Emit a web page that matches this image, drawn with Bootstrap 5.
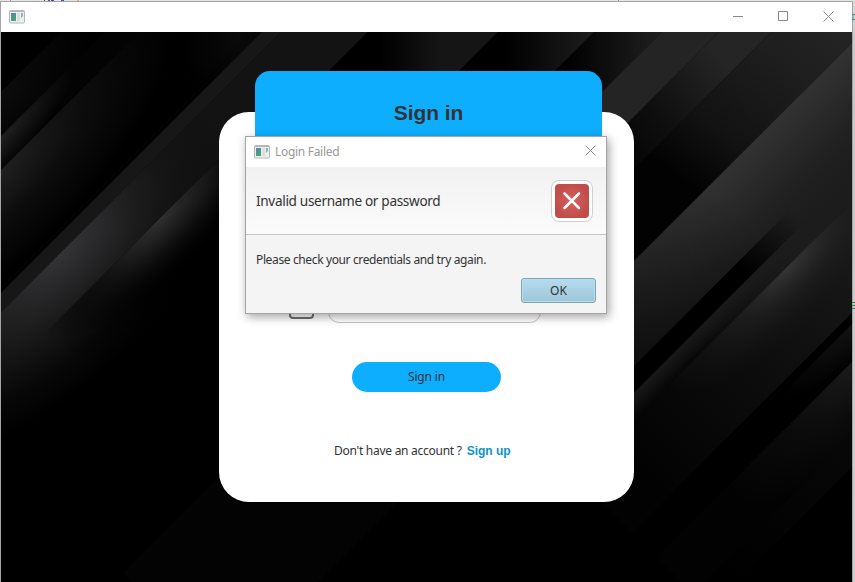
<!DOCTYPE html>
<html lang="en">
<head>
<meta charset="utf-8">
<meta name="viewport" content="width=device-width, initial-scale=1">
<title>Sign in</title>
<link href="https://cdn.jsdelivr.net/npm/bootstrap@5.3.0/dist/css/bootstrap.min.css" rel="stylesheet">
<style>
html,body{height:582px;overflow:hidden}
body{background:#dadada;font-family:"Noto Sans","Open Sans",sans-serif;font-size:12px;line-height:16px;color:#333}
.desk-strip{height:1px;background:#e4e4e4}
.desk-edge{width:2px;background:linear-gradient(#d8d8d8,#c8c8c8 40px,#cfcfcf)}
.desk-mark{right:0;width:3px;overflow:hidden;z-index:2}
.app-frame{width:853px;height:581px;border:1px solid #a3a5a5;border-bottom:0;background:#000}
.app-title{height:30px;background:#fff;padding:0 18px 1px 8px}
.win-ctl{gap:34px}
.app-body{height:550px}
.backdrop{left:0;top:0}
.login-wrap{width:415px;margin-left:218px;padding-top:39px}
.login-panel{height:390px;margin-top:-64px;border-radius:30px;background:#fff}
.login-head{width:347px;height:105px;margin-left:36px;border-radius:15px;background:#0eaeff;z-index:1;padding-top:29px}
.login-head h1{font:bold 21px/26px "Liberation Sans",Arial,sans-serif;margin:0;color:#333;letter-spacing:-.05px}
.pw-row{padding:176px 0 0 70px;gap:14px}
.pw-lock{width:25px;height:31px;border:2px solid #707070;border-radius:4px}
.pw-input{width:213px;height:35px;border:1px solid #c4c4c4;border-radius:11px;background:#fff;padding:0}
.btn-login{width:149px;height:30px;border:0;border-radius:15px;background:#0eaeff;color:#333;font-size:12px;line-height:16px;margin:39px 0 0 133px;letter-spacing:-.15px}
.btn-login:hover{background:#0eaeff;color:#333}
.signup-line{padding:51px 0 0 115px;gap:5px;line-height:16px}
.ask-text{letter-spacing:-.27px}
.title-text{letter-spacing:-.3px;margin-left:1px}
.head-text{font-size:13.600px;letter-spacing:-.33px}
.body-text{letter-spacing:-.37px}
.signup-line a{font:bold 12px/16px "Liberation Sans",Arial,sans-serif;color:#0c93cc}
.alert-win{left:245px;top:136px;width:362px;height:178px;background:#f4f4f4;border:1px solid #a3a5a5;box-shadow:2px 3px 9px rgba(0,0,0,.36);z-index:5}
.alert-title{height:30px;background:#fff;color:#999;padding:0 10px 0 8px}
.alert-head{height:68px;background:linear-gradient(#f1f1f1,#fbfbfb);border-bottom:1px solid #c5c5c5;padding:0 13px 0 10px}
.alert-text{padding:17px 10px 0}
.btn-ok{width:75px;height:25px;border:1px solid #7ba5b5;border-radius:3px;background:linear-gradient(#b3dcee,#9fc6d8);box-shadow:inset 0 0 0 1px #b9dfef;color:#333;font-size:12px;line-height:16px;margin:10px 10px 0 0}
.btn-ok:hover{background:#a9d0e2;color:#333}
</style>
<script src="https://cdn.jsdelivr.net/npm/bootstrap@5.3.0/dist/js/bootstrap.bundle.min.js"></script>
</head>
<body>
<div class="position-relative">
<svg class="position-absolute top-0 start-0" width="620" height="2" style="z-index:2"><path d="M10.500 0v1M618.500 0v1" stroke="#999"/><path d="M44 0h1M48 0h2M51 0h3M61 0h3" stroke="#5148b0" stroke-width="2"/><path d="M78 0v2" stroke="#c58530"/></svg>
<svg class="desk-mark position-absolute top-0" width="3" height="320"><path d="M0 14.500h3M0 19.500h3" stroke="#2d8d72"/><path d="M1 15v4" stroke="#50a8bd"/><path d="M0 302.500h3M0 305.500h3M0 308.500h3" stroke="#2a8b4d"/></svg>
<div class="desk-strip"></div>
<div class="d-flex">
<div class="app-frame">
  <header class="app-title d-flex align-items-center justify-content-between">
    <svg width="16" height="14" viewBox="0 0 16 14"><defs><linearGradient id="ic" x2=".4" y2="1"><stop stop-color="#5b83b0"/><stop offset="1" stop-color="#48a378"/></linearGradient></defs><rect x=".5" y=".5" width="15" height="12.500" rx="1" fill="#eee" stroke="#b5b8bb"/><path d="M1 1.500h14" stroke="#aeb3bb"/><rect x="2" y="3" width="5" height="8" fill="url(#ic)"/><path d="M8 3h3v8H8z" fill="#dedede"/><path d="M12 3h2v3l-2 2z" fill="#82b8b4"/></svg>
    <div class="win-ctl d-flex align-items-center">
      <svg width="11" height="11"><path d="M0 5.500h10" stroke="#888"/></svg>
      <svg width="11" height="11"><path d="M.5.500h9v9h-9z" fill="none" stroke="#888"/></svg>
      <svg width="11" height="11"><path d="M.5.500l10 10M10.500.500l-10 10" stroke="#888" fill="none"/></svg>
    </div>
  </header>
  <main class="app-body position-relative overflow-hidden">
    <svg class="backdrop position-absolute" width="851" height="550" viewBox="1 32 851 550">
      <defs>
        <radialGradient id="a" gradientUnits="userSpaceOnUse" r="1" gradientTransform="translate(93 -91) scale(80 160)" cx="0" cy="0"><stop stop-color="#0c0c0c"/><stop offset="1" stop-color="#000"/></radialGradient>
        <radialGradient id="b" gradientUnits="userSpaceOnUse" r="1" gradientTransform="translate(137 -145) scale(36 150)" cx="0" cy="0"><stop stop-color="#222"/><stop offset="1" stop-color="#030303"/></radialGradient>
        <radialGradient id="c" gradientUnits="userSpaceOnUse" r="1" gradientTransform="translate(171 -175) scale(115 330)" cx="0" cy="0"><stop stop-color="#202020"/><stop offset=".5" stop-color="#0c0c0c"/><stop offset="1" stop-color="#000"/></radialGradient>
        <radialGradient id="c2" gradientUnits="userSpaceOnUse" r="1" gradientTransform="translate(275 200) scale(65 90)" cx="0" cy="0"><stop stop-color="#0a0a0a"/><stop offset="1" stop-color="#0a0a0a" stop-opacity="0"/></radialGradient>
        <radialGradient id="e" gradientUnits="userSpaceOnUse" r="1" gradientTransform="translate(313 -190) scale(165 390)" cx="0" cy="0"><stop stop-color="#343437"/><stop offset=".5" stop-color="#161616"/><stop offset=".75" stop-color="#080808"/><stop offset="1" stop-color="#000"/></radialGradient>
        <linearGradient id="e2" gradientUnits="userSpaceOnUse" x1="0" x2="0" y1="-120" y2="100"><stop stop-color="#131313" stop-opacity="0"/><stop offset="1" stop-color="#131313"/></linearGradient>
        <linearGradient id="f0" gradientUnits="userSpaceOnUse" x1="0" x2="0" y1="-290" y2="-110"><stop stop-color="#000" stop-opacity="0"/><stop offset="1" stop-color="#000"/></linearGradient>
        <radialGradient id="f" gradientUnits="userSpaceOnUse" r="1" gradientTransform="translate(378 -60) scale(75 230)" cx="0" cy="0"><stop stop-color="#303031"/><stop offset=".45" stop-color="#131313"/><stop offset="1" stop-color="#000" stop-opacity="0"/></radialGradient>
        <linearGradient id="g" gradientUnits="userSpaceOnUse" x1="380" x2="440" y1="0" y2="0"><stop/><stop offset="1" stop-color="#151515"/></linearGradient>
        <linearGradient id="h" gradientUnits="userSpaceOnUse" x1="505" x2="594" y1="0" y2="0"><stop/><stop offset="1" stop-color="#1d1d1d"/></linearGradient>
        <linearGradient id="i" gradientUnits="userSpaceOnUse" x1="565" x2="662" y1="0" y2="0"><stop/><stop offset="1" stop-color="#202020"/></linearGradient>
        <linearGradient id="k" gradientUnits="userSpaceOnUse" x1="0" x2="30" y1="530" y2="760"><stop/><stop offset=".5" stop-color="#0f0f0f"/><stop offset="1" stop-color="#252525"/></linearGradient>
        <linearGradient id="l" gradientUnits="userSpaceOnUse" x1="60" x2="0" y1="390" y2="820"><stop stop-color="#020202"/><stop offset=".2" stop-color="#121212"/><stop offset=".5" stop-color="#1e1e1e"/><stop offset="1" stop-color="#2d2d2d"/></linearGradient>
        <linearGradient id="m" gradientUnits="userSpaceOnUse" x1="895" x2="1054" y1="0" y2="0"><stop stop-color="#323232"/><stop offset=".6" stop-color="#1f1f1f"/><stop offset="1" stop-color="#1a1a1a"/></linearGradient>
        <linearGradient id="m2" gradientUnits="userSpaceOnUse" x1="0" x2="0" y1="260" y2="530"><stop stop-opacity=".55"/><stop offset="1" stop-opacity="0"/></linearGradient>
        <linearGradient id="n" gradientUnits="userSpaceOnUse" x1="0" x2="0" y1="470" y2="580"><stop/><stop offset="1" stop-opacity="0"/></linearGradient>
        <linearGradient id="o" gradientUnits="userSpaceOnUse" x1="1027" x2="1058" y1="0" y2="0"><stop stop-color="#191919"/><stop offset="1" stop-color="#030303"/></linearGradient>
        <linearGradient id="o2" gradientUnits="userSpaceOnUse" x1="0" x2="0" y1="330" y2="540"><stop stop-color="#1c1c1c" stop-opacity="0"/><stop offset="1" stop-color="#1c1c1c"/></linearGradient>
        <linearGradient id="p0" gradientUnits="userSpaceOnUse" x1="0" x2="0" y1="170" y2="620"><stop stop-color="#020202"/><stop offset=".5" stop-color="#0d0d0d"/><stop offset="1" stop-color="#191919"/></linearGradient>
        <radialGradient id="p" gradientUnits="userSpaceOnUse" r="1" gradientTransform="translate(1054 520) scale(80 240)" cx="0" cy="0"><stop stop-color="#363636"/><stop offset=".4" stop-color="#222" stop-opacity=".7"/><stop offset="1" stop-color="#151515" stop-opacity="0"/></radialGradient>
        <radialGradient id="r" gradientUnits="userSpaceOnUse" r="1" gradientTransform="translate(1176 540) scale(45 150)" cx="0" cy="0"><stop stop-color="#141414"/><stop offset="1" stop-color="#000"/></radialGradient>
        <radialGradient id="s" gradientUnits="userSpaceOnUse" r="1" gradientTransform="translate(1214 500) scale(120 270)" cx="0" cy="0"><stop stop-color="#1c1c1c"/><stop offset=".5" stop-color="#0b0b0b"/><stop offset="1" stop-color="#020202"/></radialGradient>
        <linearGradient id="t" gradientUnits="userSpaceOnUse" x1="0" x2="0" y1="160" y2="420"><stop/><stop offset="1" stop-color="#080808"/></linearGradient>
      </defs>
      <rect width="860" height="600" fill="#000"/>
      <!-- diagonal bands: first axis runs down-right, second up-right -->
      <g transform="matrix(.5 .5 .5 -.5 0 0)">
        <path d="M93-600H137V400H93z" fill="url(#a)"/>
        <path d="M137-600H171V400H137z" fill="url(#b)"/>
        <path d="M171-600H294V400H171z" fill="url(#c)"/>
        <path d="M190-600H294V400H190z" fill="url(#c2)"/>
        <path d="M313-600H520V400H313z" fill="url(#e)"/>
        <path d="M313-200H400V400H313z" fill="url(#e2)"/>
        <path d="M294-600H313V400H294z" fill="#171717"/>
        <path d="M378-290H560V100H378z" fill="url(#f0)"/>
        <path d="M378-290H560V100H378z" fill="url(#f)"/>
        <path d="M696-450H900V200H696z" fill="#030303"/>
      </g>
      <path d="M368 32H498L398 132H268z" fill="url(#g)"/>
      <path d="M498 32H594L494 132H398z" fill="url(#h)"/>
      <path d="M594 32H662L562 132H494z" fill="url(#i)"/>
      <g transform="matrix(.5 .5 .5 -.5 0 0)">
        <path d="M694 400H751V800H694z" fill="#242424"/>
        <path d="M751 300H803V900H751z" fill="url(#k)"/>
        <path d="M803 300H895V900H803z" fill="url(#l)"/>
        <path d="M895 200H1054V900H895z" fill="url(#m)"/>
        <path d="M895 200H1054V900H895z" fill="url(#m2)"/>
        <path d="M1000 100H1027V900H1000z" fill="url(#n)"/>
        <path d="M1027 100H1054V600H1027z" fill="url(#o)"/>
        <path d="M1027 100H1054V900H1027z" fill="url(#o2)"/>
        <path d="M1054 100H1165V900H1054z" fill="url(#p0)"/>
        <path d="M1054 100H1165V900H1054z" fill="url(#p)"/>
        <path d="M1165 0H1176V900H1165z" fill="#000"/>
        <path d="M1176 0H1214V900H1176z" fill="url(#r)"/>
        <path d="M1214 100H1287V900H1214z" fill="url(#s)"/>
        <path d="M1287 100H1319V900H1287z" fill="url(#t)"/>
      </g>
    </svg>
    <section class="login-wrap position-relative">
      <div class="login-head position-relative text-center"><h1>Sign in</h1></div>
      <div class="login-panel">
        <div class="pw-row d-flex align-items-end">
          <div class="pw-lock mb-1"></div>
          <input class="pw-input" type="password" aria-label="Password">
        </div>
        <button class="btn btn-login d-flex align-items-center justify-content-center p-0">Sign in</button>
        <div class="signup-line d-flex"><span class="ask-text">Don't have an account ?</span><a class="text-decoration-none" href="#">Sign up</a></div>
      </div>
    </section>
  </main>
</div>
<div class="desk-edge"></div>
</div>
<div class="alert-win position-absolute" role="alertdialog">
  <div class="alert-title d-flex align-items-center">
    <svg class="me-1" width="16" height="14" viewBox="0 0 16 14"><rect x=".5" y=".5" width="15" height="12.500" rx="1" fill="#eee" stroke="#b5b8bb"/><path d="M1 1.500h14" stroke="#aeb3bb"/><rect x="2" y="3" width="5" height="8" fill="url(#ic)"/><path d="M8 3h3v8H8z" fill="#dedede"/><path d="M12 3h2v3l-2 2z" fill="#82b8b4"/></svg>
    <span class="ms-auto order-2 d-flex pb-1"><svg width="11" height="11"><path d="M.5.500l10 10M10.500.500l-10 10" stroke="#888"/></svg></span>
    <span class="title-text">Login Failed</span>
  </div>
  <div class="alert-head d-flex align-items-center justify-content-between">
    <span class="head-text">Invalid username or password</span>
    <svg width="42" height="42" viewBox="0 0 42 42"><defs><radialGradient id="er"><stop stop-color="#d95f5f"/><stop offset="1" stop-color="#c04d49"/></radialGradient></defs><rect x=".5" y=".5" width="41" height="41" rx="7.500" fill="#fff" stroke="#cfcfcf"/><rect x="4" y="4" width="34" height="34" rx="4" fill="url(#er)"/><path d="M13.500 13.500l14.500 14.500M28 13.500L13.500 28" stroke="#fff" stroke-width="2.500" stroke-linecap="round"/></svg>
  </div>
  <div class="alert-text"><span class="body-text">Please check your credentials and try again.</span></div>
  <button class="btn btn-ok d-flex align-items-center justify-content-center p-0 ms-auto">OK</button>
</div>
</div>
</body>
</html>
